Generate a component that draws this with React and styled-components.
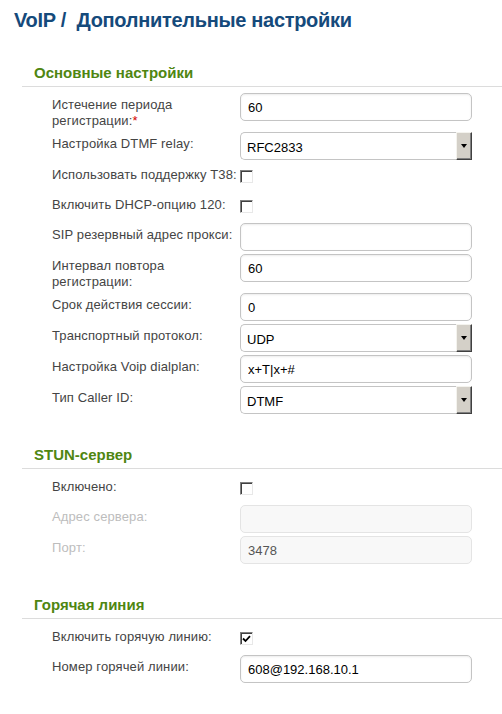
import React from "react";
import styled, { createGlobalStyle } from "styled-components";

const GlobalStyle = createGlobalStyle`
  body {
    margin: 0;
    background: #fff;
    font-family: "Liberation Sans", Arial, sans-serif;
  }
`;

const sections = [
  {
    title: "Основные настройки",
    rows: [
      { label: ["Истечение периода", "регистрации:"], required: true, type: "input", value: "60" },
      { label: ["Настройка DTMF relay:"], type: "select", value: "RFC2833" },
      { label: ["Использовать поддержку T38:"], type: "check" },
      { label: ["Включить DHCP-опцию 120:"], type: "check" },
      { label: ["SIP резервный адрес прокси:"], type: "input", value: "" },
      { label: ["Интервал повтора", "регистрации:"], type: "input", value: "60" },
      { label: ["Срок действия сессии:"], type: "input", value: "0" },
      { label: ["Транспортный протокол:"], type: "select", value: "UDP" },
      { label: ["Настройка Voip dialplan:"], type: "input", value: "x+T|x+#" },
      { label: ["Тип Caller ID:"], type: "select", value: "DTMF" },
    ],
  },
  {
    title: "STUN-сервер",
    rows: [
      { label: ["Включено:"], type: "check" },
      { label: ["Адрес сервера:"], type: "input", value: "", disabled: true },
      { label: ["Порт:"], type: "input", value: "3478", disabled: true },
    ],
  },
  {
    title: "Горячая линия",
    rows: [
      { label: ["Включить горячую линию:"], type: "check", checked: true },
      { label: ["Номер горячей линии:"], type: "input", value: "608@192.168.10.1" },
    ],
  },
];

function Field({ row }) {
  if (row.type === "check") {
    return (
      <CheckBox>
        {row.checked && (
          <svg width="9" height="8" viewBox="0 0 9 8">
            <path d="M1 3.5 L3.5 6 L8 1.2" fill="none" stroke="#000" strokeWidth="1.8" />
          </svg>
        )}
      </CheckBox>
    );
  }
  if (row.type === "select") {
    return (
      <Select>
        <span>{row.value}</span>
        <ArrowButton />
      </Select>
    );
  }
  return <Input readOnly value={row.value} $disabled={row.disabled} />;
}

function App() {
  return (
    <Page>
      <GlobalStyle />
      <Title>VoIP /&nbsp; Дополнительные настройки</Title>
      {sections.map((s) => (
        <Section key={s.title}>
          <SectionHeader>{s.title}</SectionHeader>
          <Rows>
            {s.rows.map((r, i) => (
              <Row key={i} $check={r.type === "check"}>
                <Label $disabled={r.disabled}>
                  {r.label.map((line, j) => (
                    <React.Fragment key={j}>
                      {j > 0 && <br />}
                      {line}
                    </React.Fragment>
                  ))}
                  {r.required && <Req>*</Req>}
                </Label>
                <Field row={r} />
              </Row>
            ))}
          </Rows>
        </Section>
      ))}
    </Page>
  );
}

export default App;

const Page = styled.div`
  width: 502px;
  min-height: 714px;
  padding-top: 8px;
  box-sizing: border-box;
`;

const Title = styled.h1`
  margin: 0;
  padding-left: 14px;
  font-size: 20px;
  line-height: 24px;
  font-weight: bold;
  letter-spacing: -0.3px;
  color: #154a7b;
  white-space: nowrap;
`;

const Section = styled.section`
  margin: 32px 0 0 22px;
`;

const SectionHeader = styled.h3`
  margin: 0;
  padding: 0 0 4px 12px;
  font-size: 15px;
  line-height: 18px;
  font-weight: bold;
  color: #4f8611;
  border-bottom: 1px solid #dcdcdc;
`;

const Rows = styled.div`
  display: flex;
  flex-direction: column;
  gap: 3px;
  padding: 6px 0 0 30px;
`;

const Row = styled.div`
  display: grid;
  grid-template-columns: 188px 232px;
  align-items: start;
  min-height: ${(p) => (p.$check ? "27px" : "28px")};
`;

const Label = styled.div`
  padding-top: 4px;
  font-size: 13px;
  line-height: 16px;
  letter-spacing: 0.12px;
  color: ${(p) => (p.$disabled ? "#bdbdbd" : "#444")};
  white-space: nowrap;
`;

const Req = styled.span`
  color: #d40000;
`;

const Input = styled.input`
  box-sizing: border-box;
  width: 232px;
  height: 28px;
  margin: 0;
  padding: 0 7px;
  border: 1px solid ${(p) => (p.$disabled ? "#e4e4e4" : "#c4c4c4")};
  border-radius: 5px;
  background: ${(p) => (p.$disabled ? "#f8f8f8" : "#fff")};
  box-shadow: ${(p) => (p.$disabled ? "none" : "inset 0 1px 2px rgba(0, 0, 0, 0.08)")};
  font-family: "Liberation Sans", Arial, sans-serif;
  font-size: 13px;
  color: ${(p) => (p.$disabled ? "#555" : "#000")};
  outline: none;
`;

const Select = styled.div`
  box-sizing: border-box;
  width: 232px;
  height: 28px;
  display: flex;
  align-items: center;
  justify-content: space-between;
  padding-left: 6px;
  border: 1px solid #c4c4c4;
  border-right: none;
  border-radius: 5px 0 0 5px;
  background: #fff;
  font-size: 13px;
  color: #000;
  span {
    padding-top: 2px;
  }
`;

const ArrowButton = styled.div`
  box-sizing: border-box;
  width: 16px;
  height: 28px;
  margin-top: -1px;
  margin-bottom: -1px;
  display: flex;
  align-items: center;
  justify-content: center;
  background: #d4d0c8;
  border: 1px solid;
  border-color: #f4f3ee #404040 #404040 #f4f3ee;
  box-shadow: inset -1px -1px #808080;
  &::after {
    content: "";
    border-left: 3.5px solid transparent;
    border-right: 3.5px solid transparent;
    border-top: 4px solid #000;
  }
`;

const CheckBox = styled.div`
  box-sizing: border-box;
  width: 13px;
  height: 13px;
  margin-top: 7px;
  display: flex;
  align-items: center;
  justify-content: center;
  background: #fff;
  border: 1px solid;
  border-color: #808080 #e8e8e8 #e8e8e8 #808080;
  box-shadow: inset 1px 1px #404040;
`;
